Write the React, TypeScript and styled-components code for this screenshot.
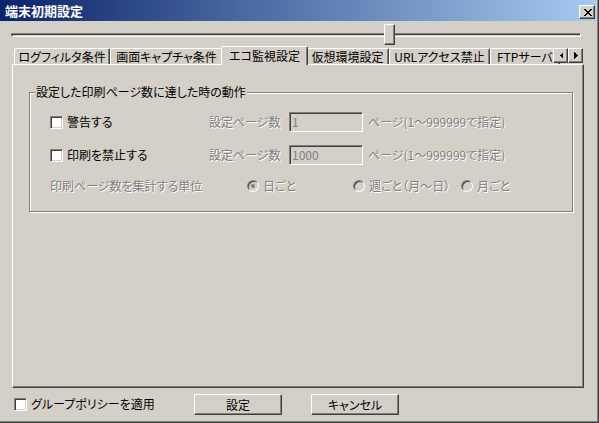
import React from "react";
import styled, { createGlobalStyle, css } from "styled-components";

const GlobalStyle = createGlobalStyle`
  html, body { margin: 0; padding: 0; background: #d4d0c8; }
  * { box-sizing: border-box; }
`;

const FONT = `"Noto Sans CJK JP", "Noto Sans", sans-serif`;

const raised = css`
  background: #d4d0c8;
  border: 1px solid;
  border-color: #fff #404040 #404040 #fff;
  box-shadow: inset -1px -1px 0 #808080;
`;

const sunken = css`
  border: 1px solid;
  border-color: #808080 #fff #fff #808080;
  box-shadow: inset 1px 1px 0 #404040, inset -1px -1px 0 #d4d0c8;
`;

const Window = styled.div`
  width: 599px;
  height: 423px;
  background: #d4d0c8;
  display: flex;
  flex-direction: column;
  padding: 0 2px 2px 0;
  border-right: 1px solid #404040;
  border-bottom: 1px solid #404040;
  box-shadow: inset -1px -1px 0 #808080;
  font-family: ${FONT};
  font-size: 12px;
  line-height: 14px;
  font-feature-settings: "palt";
  color: #000;
  overflow: hidden;
`;

const TitleBar = styled.div`
  height: 21px;
  flex: none;
  display: flex;
  align-items: center;
  justify-content: space-between;
  padding: 0 1px 0 5px;
  background: linear-gradient(to right, #0a246a, #a6caf0);
`;

const TitleText = styled.span`
  color: #fff;
  font-weight: bold;
  font-size: 13px;
  line-height: 21px;
  font-feature-settings: normal;
`;

const CloseButton = styled.div`
  ${raised};
  width: 16px;
  height: 14px;
  margin-top: 3px;
  display: flex;
  align-items: center;
  justify-content: center;
  padding-left: 1px;
`;

const SliderRow = styled.div`
  position: relative;
  margin: 3px 0 0 11px;
  width: 570px;
  height: 21px;
  display: flex;
  align-items: center;
  flex: none;
`;

const Track = styled.div`
  ${sunken};
  width: 100%;
  height: 4px;
  background: #d4d0c8;
`;

const Thumb = styled.div`
  ${raised};
  position: absolute;
  top: 0;
  width: 11px;
  height: 21px;
`;

const TabStrip = styled.div`
  position: relative;
  margin: 1px 0 0 12px;
  width: 572px;
  height: 19px;
  padding-left: 2px;
  display: flex;
  align-items: flex-start;
  overflow: hidden;
  flex: none;
`;

const Tab = styled.div<{ $w?: number; $active?: boolean }>`
  flex: none;
  ${(p) => (p.$w ? `width: ${p.$w}px;` : `padding: 0 6px;`)}
  height: 16px;
  margin-top: 2px;
  display: flex;
  align-items: center;
  justify-content: center;
  white-space: nowrap;
  background: #d4d0c8;
  border-top: 1px solid #fff;
  border-left: 1px solid #fff;
  border-right: 1px solid #404040;
  box-shadow: inset -1px 0 0 #808080;
  border-radius: 2px 2px 0 0;
  ${(p) =>
    p.$active &&
    css`
      position: relative;
      z-index: 2;
      height: 19px;
      margin: 0 -2px;
      padding-bottom: 1px;
    `}
`;

const ScrollButtons = styled.div`
  position: absolute;
  right: 1px;
  top: 2px;
  display: flex;
  z-index: 3;
`;

const ArrowButton = styled.div`
  ${raised};
  width: 15px;
  height: 15px;
  display: flex;
  align-items: center;
  justify-content: center;
`;

const Panel = styled.div`
  margin: -1px 0 0 12px;
  width: 572px;
  height: 324px;
  flex: none;
  display: flex;
  flex-direction: column;
  border-top: 1px solid #fff;
  border-left: 1px solid #fff;
  border-right: 1px solid #404040;
  border-bottom: 1px solid #404040;
  box-shadow: inset -1px -1px 0 #808080;
`;

const GroupBox = styled.div`
  margin: 27px 10px 0 16px;
  height: 120px;
  border: 1px solid #808080;
  box-shadow: 1px 1px 0 #fff, inset 1px 1px 0 #fff;
  display: flex;
  flex-direction: column;
`;

const Caption = styled.div`
  align-self: flex-start;
  margin: -8px 0 0 5px;
  padding: 0 1px;
  background: #d4d0c8;
  line-height: 14px;
`;

const Row = styled.div<{ $mt: number }>`
  display: flex;
  align-items: center;
  height: 20px;
  margin-top: ${(p) => p.$mt}px;
  padding-left: 20px;
`;

const CheckLabel = styled.label<{ $w: number }>`
  display: flex;
  align-items: center;
  gap: 4px;
  width: ${(p) => p.$w}px;
  flex: none;
`;

const CheckBox = styled.span`
  ${sunken};
  width: 13px;
  height: 13px;
  background: #fff;
  flex: none;
`;

const Disabled = styled.span<{ $w?: number }>`
  color: #808080;
  text-shadow: 1px 1px 0 #fff;
  white-space: nowrap;
  ${(p) => (p.$w ? `width: ${p.$w}px; flex: none;` : "")}
`;

const TextInput = styled.div`
  ${sunken};
  width: 74px;
  height: 20px;
  background: #d4d0c8;
  color: #808080;
  padding: 2px 0 0 2px;
  line-height: 14px;
  margin-right: 5px;
  flex: none;
`;

const RadioOption = styled.div<{ $w?: number }>`
  display: flex;
  align-items: center;
  gap: 4px;
  ${(p) => (p.$w ? `width: ${p.$w}px; flex: none;` : "")}
`;

const RadioCircle = styled.span<{ $checked?: boolean }>`
  width: 12px;
  height: 12px;
  border-radius: 50%;
  border: 1px solid;
  border-color: #808080 #fff #fff #808080;
  box-shadow: inset 1px 1px 0 #404040, inset -1px -1px 0 #d4d0c8;
  background: #d4d0c8;
  display: flex;
  align-items: center;
  justify-content: center;
  flex: none;
  &::after {
    content: "";
    width: 4px;
    height: 4px;
    border-radius: 50%;
    background: ${(p) => (p.$checked ? "#808080" : "transparent")};
  }
`;

const BottomBar = styled.div`
  flex: 1;
  display: flex;
  align-items: center;
  padding-left: 14px;
`;

const PushButton = styled.button`
  ${raised};
  width: 88px;
  height: 21px;
  padding: 0;
  font-family: ${FONT};
  font-size: 12px;
  font-feature-settings: "palt";
  color: #000;
  margin-right: 29px;
`;

const CloseGlyph = () => (
  <svg width="8" height="7" viewBox="0 0 8 7" shapeRendering="crispEdges">
    <path
      fill="#000"
      d="M0 0h2v1H0zM6 0h2v1H6zM1 1h2v1H1zM5 1h2v1H5zM2 2h4v1H2zM3 3h2v1H3zM2 4h4v1H2zM1 5h2v1H1zM5 5h2v1H5zM0 6h2v1H0zM6 6h2v1H6z"
    />
  </svg>
);

const Arrow = ({ dir }: { dir: "left" | "right" }) => (
  <svg width="4" height="7" viewBox="0 0 4 7" shapeRendering="crispEdges">
    <polygon fill="#000" points={dir === "left" ? "4,0 4,7 0.5,3.5" : "0,0 0,7 3.5,3.5"} />
  </svg>
);

const tabs: { label: string; w?: number; active?: boolean }[] = [
  { label: "ログフィルタ条件", w: 96 },
  { label: "画面キャプチャ条件", w: 113 },
  { label: "エコ監視設定", w: 87, active: true },
  { label: "仮想環境設定", w: 83 },
  { label: "URLアクセス禁止", w: 101 },
  { label: "FTPサーバ" },
];

export default function App() {
  const sliderValue = 2 / 3;
  return (
    <>
      <GlobalStyle />
      <Window>
        <TitleBar>
          <TitleText>端末初期設定</TitleText>
          <CloseButton>
            <CloseGlyph />
          </CloseButton>
        </TitleBar>

        <SliderRow>
          <Track />
          <Thumb style={{ left: `calc((100% - 11px) * ${sliderValue})` }} />
        </SliderRow>

        <TabStrip>
          {tabs.map((t) => (
            <Tab key={t.label} $w={t.w} $active={t.active}>
              {t.label}
            </Tab>
          ))}
          <ScrollButtons>
            <ArrowButton>
              <Arrow dir="left" />
            </ArrowButton>
            <ArrowButton>
              <Arrow dir="right" />
            </ArrowButton>
          </ScrollButtons>
        </TabStrip>

        <Panel>
          <GroupBox>
            <Caption>設定した印刷ページ数に達した時の動作</Caption>
            <Row $mt={13}>
              <CheckLabel $w={159}>
                <CheckBox />
                警告する
              </CheckLabel>
              <Disabled $w={80}>設定ページ数</Disabled>
              <TextInput>1</TextInput>
              <Disabled>ページ(1～999999で指定)</Disabled>
            </Row>
            <Row $mt={13}>
              <CheckLabel $w={159}>
                <CheckBox />
                印刷を禁止する
              </CheckLabel>
              <Disabled $w={80}>設定ページ数</Disabled>
              <TextInput>1000</TextInput>
              <Disabled>ページ(1～999999で指定)</Disabled>
            </Row>
            <Row $mt={11}>
              <Disabled $w={197}>印刷ページ数を集計する単位</Disabled>
              <RadioOption $w={106}>
                <RadioCircle $checked />
                <Disabled>日ごと</Disabled>
              </RadioOption>
              <RadioOption $w={108}>
                <RadioCircle />
                <Disabled>週ごと（月～日）</Disabled>
              </RadioOption>
              <RadioOption>
                <RadioCircle />
                <Disabled>月ごと</Disabled>
              </RadioOption>
            </Row>
          </GroupBox>
        </Panel>

        <BottomBar>
          <CheckLabel $w={180}>
            <CheckBox />
            グループポリシーを適用
          </CheckLabel>
          <PushButton>設定</PushButton>
          <PushButton>キャンセル</PushButton>
        </BottomBar>
      </Window>
    </>
  );
}
